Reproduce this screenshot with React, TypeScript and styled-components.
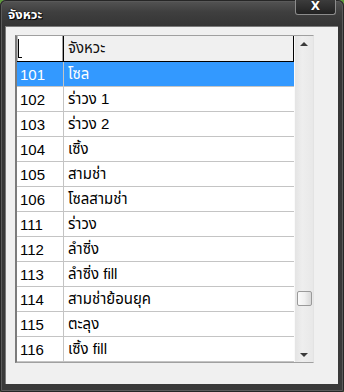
import React from 'react';
import styled, { createGlobalStyle } from 'styled-components';

const GlobalStyle = createGlobalStyle`
  html, body {
    margin: 0;
    padding: 0;
    background: #5e9c3c;
  }
  body {
    font-family: "Liberation Sans", "Noto Sans Thai", "Noto Sans", sans-serif;
  }
`;

const Window = styled.div`
  width: 344px;
  height: 392px;
  box-sizing: border-box;
  display: flex;
  flex-direction: column;
  background: linear-gradient(#555 0, #3f3f3f 12px, #353535 26px, #3a3a3a 100%);
  border-radius: 6px 6px 2px 2px;
  box-shadow: inset 0 0 0 1px #262626, inset 0 0 0 2px #5a5a5a;
`;

const TitleBar = styled.div`
  height: 26px;
  display: flex;
  align-items: flex-start;
  justify-content: space-between;
  padding: 0 8px 0 8px;
  flex-shrink: 0;
`;

const Title = styled.span`
  margin-top: 5px;
  color: #fff;
  font-size: 13px;
  font-weight: bold;
  text-shadow: 1px 1px 0 #000, 0 0 2px #000;
`;

const CloseButton = styled.div`
  width: 41px;
  height: 15px;
  box-sizing: border-box;
  border: 1px solid #8c8c8c;
  border-top: none;
  border-radius: 0 0 3px 3px;
  background: linear-gradient(#3c3c3c, #222);
  color: #fff;
  font-family: "DejaVu Sans", sans-serif;
  font-size: 12px;
  font-weight: bold;
  line-height: 13px;
  text-align: center;
  text-shadow: 0 0 1px #000;
`;

const Body = styled.div`
  flex: 1;
  margin: 0 6px 8px 5px;
  background: #f0f0f0;
  padding: 9px 24px 0 10px;
  box-shadow: inset 1px 1px 0 #7a7a7a;
`;

const Grid = styled.div`
  width: 299px;
  height: 328px;
  box-sizing: border-box;
  display: flex;
  background: #fff;
  border-top: 1px solid #a0a0a0;
  border-left: 2px solid #7c7c7c;
  border-right: 1px solid #e3e3e3;
  border-bottom: 1px solid #a0a0a0;
  overflow: hidden;
`;

const Table = styled.div`
  flex: 1;
  display: flex;
  flex-direction: column;
`;

const HeaderRow = styled.div`
  display: flex;
  height: 25px;
  border-bottom: 1px solid #000;
  flex-shrink: 0;
`;

const CornerCell = styled.div`
  width: 44px;
  position: relative;
  background: #fff;
  border-right: 1px solid #a0a0a0;
  border-left: 1px solid #bdbdbd;
  &::before {
    content: '';
    position: absolute;
    left: 0;
    top: 3px;
    width: 3px;
    height: 18px;
    border-left: 1px solid #000;
    border-bottom: 1px solid #000;
  }
`;

const HeaderCell = styled.div`
  flex: 1;
  display: flex;
  align-items: center;
  padding-left: 4px;
  background: #f0f0f0;
  border-left: 1px solid #000;
  border-right: 1px solid #000;
  font-size: 15px;
  color: #111;
`;

const Row = styled.div<{ $selected?: boolean }>`
  display: flex;
  height: 24px;
  border-bottom: 1px solid #c4c4c4;
  flex-shrink: 0;
  background: ${p => (p.$selected ? '#3399ff' : '#fff')};
  color: ${p => (p.$selected ? '#fff' : '#000')};
  font-size: 15px;
`;

const NumCell = styled.div`
  width: 43px;
  display: flex;
  align-items: center;
  padding-left: 3px;
  border-right: 1px solid #c4c4c4;
  font-size: 15px;
`;

const NameCell = styled.div`
  flex: 1;
  display: flex;
  align-items: center;
  padding-left: 4px;
  color: ${'inherit'};
`;

const ScrollBar = styled.div`
  width: 18px;
  flex-shrink: 0;
  display: flex;
  flex-direction: column;
  align-items: center;
  background: linear-gradient(90deg, #e4e4e4, #eeeeee 40%, #e8e8e8);
  border-left: 1px solid #fafafa;
`;

const Arrow = styled.div<{ $down?: boolean }>`
  width: 0;
  height: 0;
  margin: ${p => (p.$down ? 'auto 0 5px' : '6px 0 0')};
  border-left: 4px solid transparent;
  border-right: 4px solid transparent;
  ${p => (p.$down ? 'border-top: 4px solid #3a3a3a;' : 'border-bottom: 4px solid #3a3a3a;')}
`;

const Thumb = styled.div`
  width: 15px;
  height: 15px;
  box-sizing: border-box;
  margin-top: 245px;
  border: 1px solid #9a9a9a;
  border-radius: 2px;
  background: linear-gradient(90deg, #fafafa, #f0f0f0 50%, #d8d8d8);
`;

const rows: [string, string][] = [
  ['101', 'โซล'],
  ['102', 'ร่าวง 1'],
  ['103', 'ร่าวง 2'],
  ['104', 'เซิ้ง'],
  ['105', 'สามช่า'],
  ['106', 'โซลสามช่า'],
  ['111', 'ร่าวง'],
  ['112', 'ลำซิ่ง'],
  ['113', 'ลำซิ่ง fill'],
  ['114', 'สามช่าย้อนยุค'],
  ['115', 'ตะลุง'],
  ['116', 'เซิ้ง fill'],
];

export default function App() {
  return (
    <>
      <GlobalStyle />
      <Window>
        <TitleBar>
          <Title>จังหวะ</Title>
          <CloseButton>X</CloseButton>
        </TitleBar>
        <Body>
          <Grid>
            <Table>
              <HeaderRow>
                <CornerCell />
                <HeaderCell>จังหวะ</HeaderCell>
              </HeaderRow>
              {rows.map(([num, name], i) => (
                <Row key={num} $selected={i === 0}>
                  <NumCell>{num}</NumCell>
                  <NameCell>{name}</NameCell>
                </Row>
              ))}
            </Table>
            <ScrollBar>
              <Arrow />
              <Thumb />
              <Arrow $down />
            </ScrollBar>
          </Grid>
        </Body>
      </Window>
    </>
  );
}
